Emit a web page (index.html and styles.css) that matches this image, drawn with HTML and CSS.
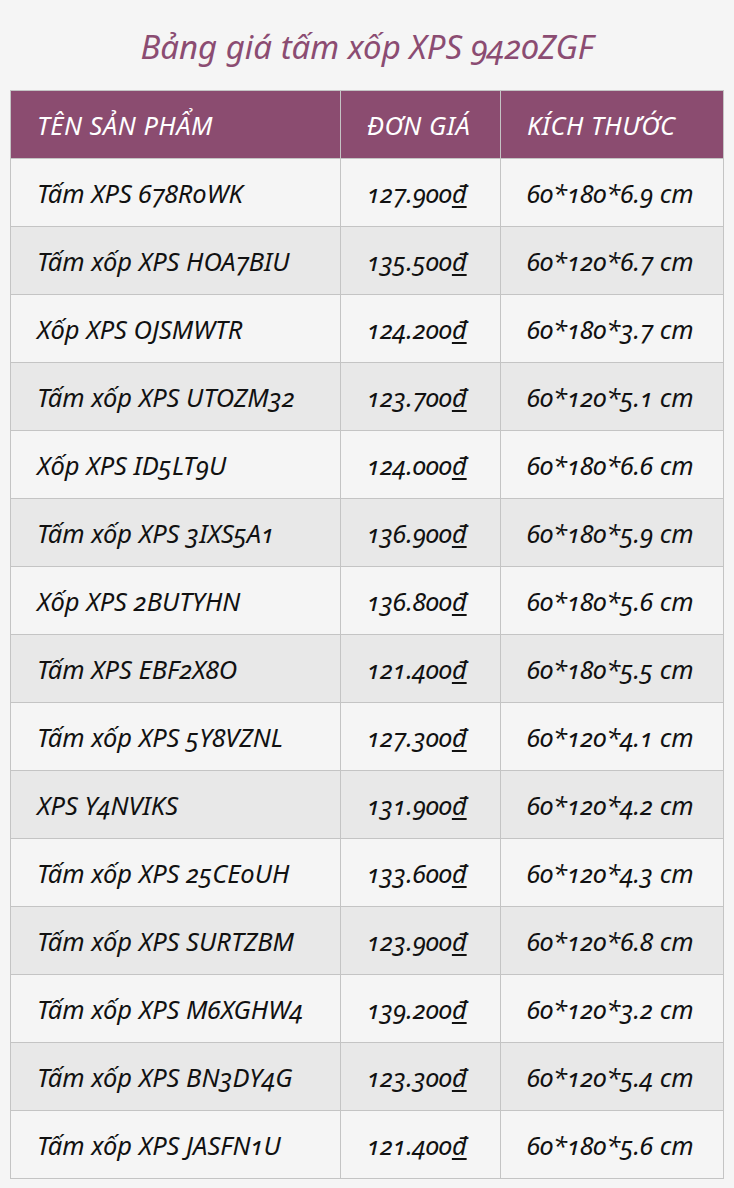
FILE: index.html
```html
<!DOCTYPE html>
<html lang="vi">
<head>
<meta charset="utf-8">
<title>Bảng giá tấm xốp XPS 9420ZGF</title>
<link rel="stylesheet" href="styles.css">
</head>
<body>
<div class="page">
  <h2 class="title">Bảng giá tấm xốp XPS 9420ZGF</h2>
  <table class="price-table">
    <colgroup>
      <col class="c-name"><col class="c-price"><col class="c-size">
    </colgroup>
    <thead>
      <tr><th>TÊN SẢN PHẨM</th><th>ĐƠN GIÁ</th><th>KÍCH THƯỚC</th></tr>
    </thead>
    <tbody>
      <tr><td>Tấm XPS 678RoWK</td><td>127.900<u>đ</u></td><td>60*180*6.9 cm</td></tr>
      <tr><td>Tấm xốp XPS HOA7BIU</td><td>135.500<u>đ</u></td><td>60*120*6.7 cm</td></tr>
      <tr><td>Xốp XPS OJSMWTR</td><td>124.200<u>đ</u></td><td>60*180*3.7 cm</td></tr>
      <tr><td>Tấm xốp XPS UTOZM32</td><td>123.700<u>đ</u></td><td>60*120*5.1 cm</td></tr>
      <tr><td>Xốp XPS ID5LT9U</td><td>124.000<u>đ</u></td><td>60*180*6.6 cm</td></tr>
      <tr><td>Tấm xốp XPS 3IXS5A1</td><td>136.900<u>đ</u></td><td>60*180*5.9 cm</td></tr>
      <tr><td>Xốp XPS 2BUTYHN</td><td>136.800<u>đ</u></td><td>60*180*5.6 cm</td></tr>
      <tr><td>Tấm XPS EBF2X8O</td><td>121.400<u>đ</u></td><td>60*180*5.5 cm</td></tr>
      <tr><td>Tấm xốp XPS 5Y8VZNL</td><td>127.300<u>đ</u></td><td>60*120*4.1 cm</td></tr>
      <tr><td>XPS Y4NVIKS</td><td>131.900<u>đ</u></td><td>60*120*4.2 cm</td></tr>
      <tr><td>Tấm xốp XPS 25CEoUH</td><td>133.600<u>đ</u></td><td>60*120*4.3 cm</td></tr>
      <tr><td>Tấm xốp XPS SURTZBM</td><td>123.900<u>đ</u></td><td>60*120*6.8 cm</td></tr>
      <tr><td>Tấm xốp XPS M6XGHW4</td><td>139.200<u>đ</u></td><td>60*120*3.2 cm</td></tr>
      <tr><td>Tấm xốp XPS BN3DY4G</td><td>123.300<u>đ</u></td><td>60*120*5.4 cm</td></tr>
      <tr><td>Tấm xốp XPS JASFN1U</td><td>121.400<u>đ</u></td><td>60*180*5.6 cm</td></tr>
    </tbody>
  </table>
</div>
</body>
</html>
```
FILE: styles.css
```css
html, body {
  margin: 0;
  padding: 0;
  background: #f5f5f5;
}
body {
  font-family: "Noto Sans", "Open Sans", sans-serif;
  font-style: italic;
  font-variant-numeric: oldstyle-nums;
  color: #111;
}
.page {
  padding: 26px 10px 10px 10px;
}
.title {
  margin: 0 0 22px 0;
  text-align: center;
  font-weight: 400;
  font-size: 33px;
  line-height: 42px;
  color: #8b4c72;
}
.price-table {
  width: 713px;
  border-collapse: collapse;
  table-layout: fixed;
}
.c-name { width: 330px; }
.c-price { width: 160px; }
.c-size { width: 223px; }
.price-table th,
.price-table td {
  border: 1px solid #c4c4c4;
  height: 67px;
  padding: 0 0 0 26px;
  text-align: left;
  font-size: 25.5px;
  font-weight: 400;
  white-space: nowrap;
}
.price-table th {
  background: #8b4c70;
  color: #fff;
  letter-spacing: 0.5px;
}
.price-table tbody tr:nth-child(odd) td { background: #f5f5f5; }
.price-table tbody tr:nth-child(even) td { background: #e8e8e8; }
.price-table u { text-underline-offset: 3px; }
```
